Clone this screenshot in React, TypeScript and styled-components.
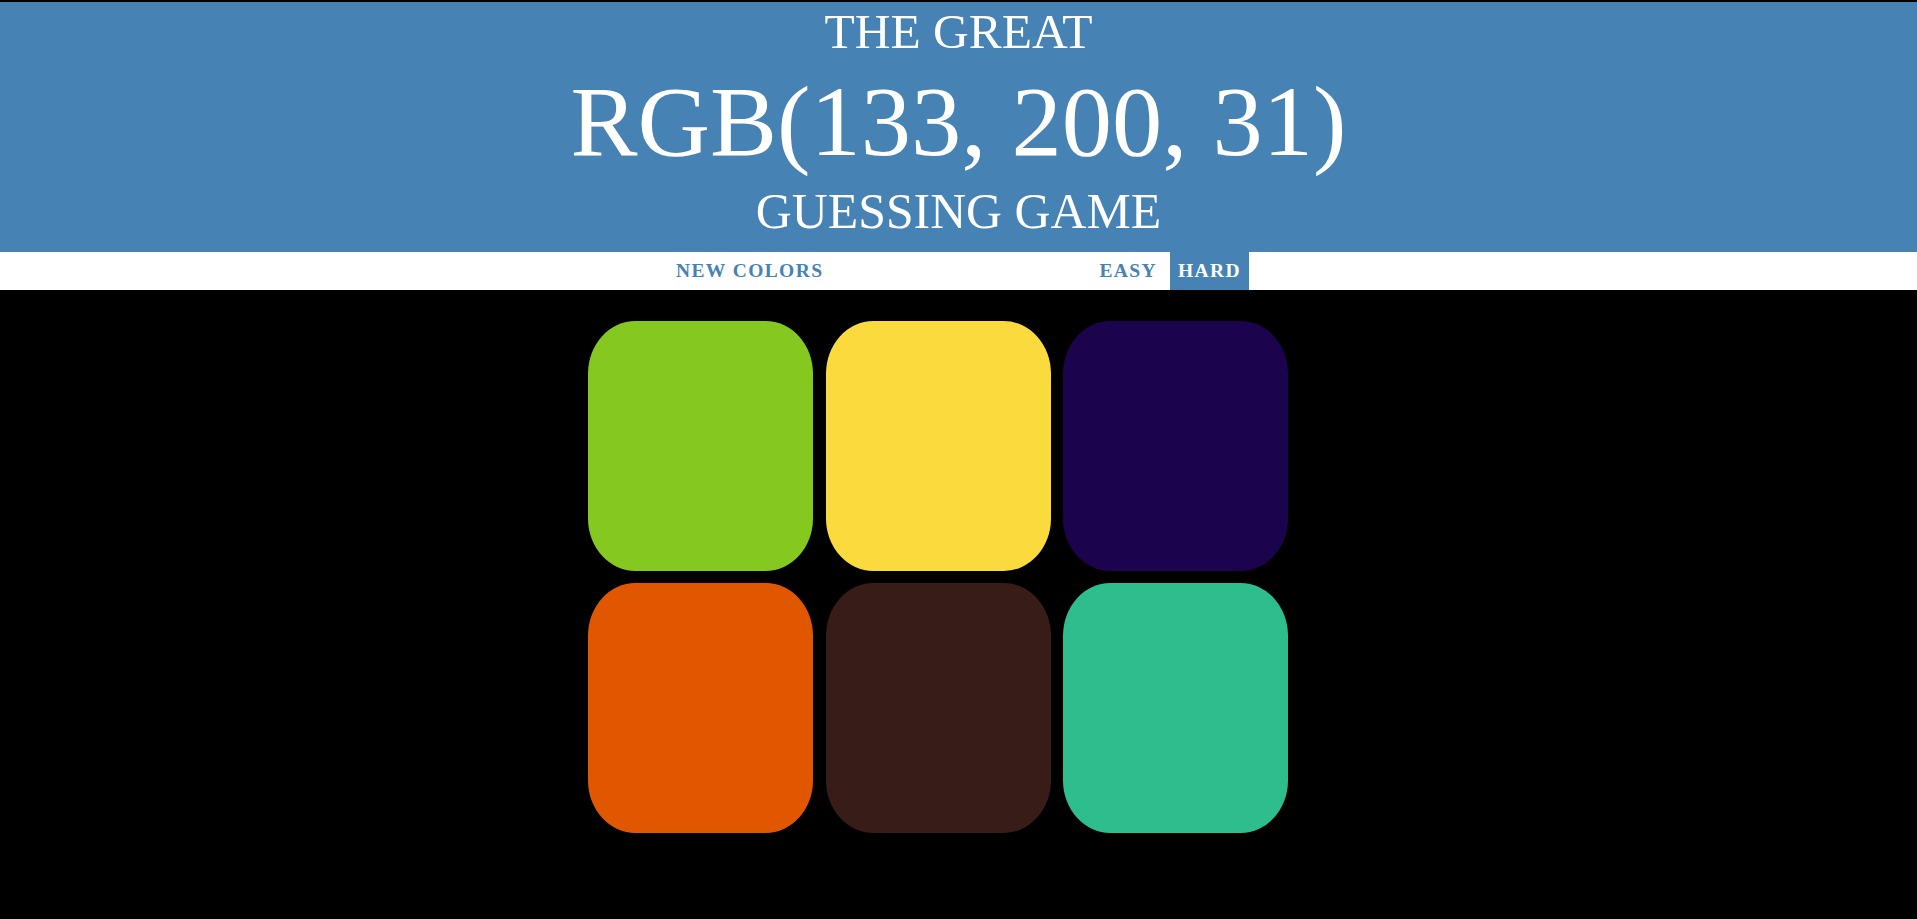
import React from "react";
import styled, { createGlobalStyle } from "styled-components";

const GlobalStyle = createGlobalStyle`
  html, body {
    margin: 0;
    padding: 0;
    background: #000000;
  }
  body {
    font-family: "Liberation Serif", "Times New Roman", serif;
  }
`;

const Page = styled.div`
  padding-top: 2px;
  min-height: 917px;
  background: #000000;
`;

const Header = styled.h1`
  margin: 0;
  padding: 3px 0 12px;
  background: steelblue;
  color: #ffffff;
  text-align: center;
  font-weight: 400;
  text-transform: uppercase;
`;

const Line = styled.span<{ $size: number; $lh: number }>`
  display: block;
  font-size: ${(p) => p.$size}px;
  line-height: ${(p) => p.$lh}px;
  white-space: nowrap;
`;

const Stripe = styled.nav`
  height: 38px;
  background: #ffffff;
  display: flex;
  justify-content: center;
  align-items: stretch;
  gap: 5px;
`;

const NavButton = styled.button<{ $selected?: boolean }>`
  border: none;
  margin: 0;
  padding: 0 8px;
  height: 100%;
  background: ${(p) => (p.$selected ? "steelblue" : "transparent")};
  color: ${(p) => (p.$selected ? "#ffffff" : "steelblue")};
  font-family: "Liberation Serif", "Times New Roman", serif;
  font-size: 19.5px;
  font-weight: 700;
  letter-spacing: 1.4px;
  text-transform: uppercase;
  cursor: pointer;
  outline: none;
`;

const Message = styled.span`
  display: inline-block;
  width: 250px;
`;

const Board = styled.div`
  margin: 31px 0 0 calc(50% - 370.5px);
  display: grid;
  grid-template-columns: repeat(3, 225px);
  grid-auto-rows: 250px;
  column-gap: 12.5px;
  row-gap: 12px;
  width: 700px;
`;

const Square = styled.div<{ $color: string }>`
  background: ${(p) => p.$color};
  border-radius: 21%;
`;

const colors = [
  "rgb(133, 200, 31)",
  "rgb(250, 218, 61)",
  "rgb(28, 3, 77)",
  "rgb(224, 87, 0)",
  "rgb(56, 28, 24)",
  "rgb(46, 189, 140)",
];

export default function App() {
  return (
    <Page>
      <GlobalStyle />
      <Header>
        <Line $size={49.5} $lh={54}>The Great</Line>
        <Line $size={100.5} $lh={124}>RGB(133, 200, 31)</Line>
        <Line $size={49.8} $lh={57}>Guessing Game</Line>
      </Header>
      <Stripe>
        <NavButton>New Colors</NavButton>
        <Message />
        <NavButton>Easy</NavButton>
        <NavButton $selected>Hard</NavButton>
      </Stripe>
      <Board>
        {colors.map((c, i) => (
          <Square key={i} $color={c} />
        ))}
      </Board>
    </Page>
  );
}
